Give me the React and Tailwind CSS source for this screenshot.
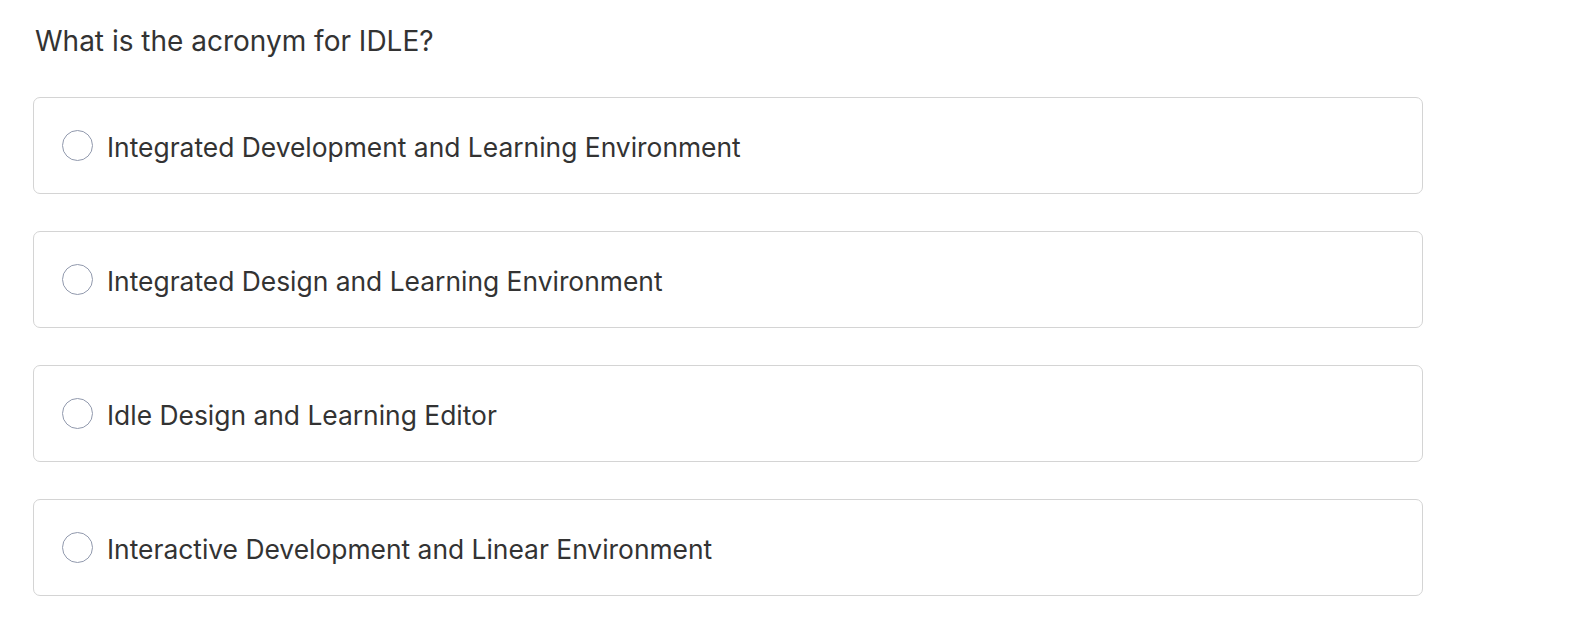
export default function App() {
  const options = [
    "Integrated Development and Learning Environment",
    "Integrated Design and Learning Environment",
    "Idle Design and Learning Editor",
    "Interactive Development and Linear Environment",
  ];
  return (
    <div className="min-h-[642px] w-full bg-white pl-[33px] pt-[21px] text-[#333333]" style={{ fontFamily: 'Inter, "Noto Sans", sans-serif' }}>
      <div className="pl-[2px] text-[28px] leading-[40px]">What is the acronym for IDLE?</div>
      <div className="mt-[36px] flex w-[1390px] flex-col gap-[37px]">
        {options.map((o) => (
          <label key={o} className="flex h-[97px] items-center rounded-[7px] border border-[#d4d4d4] pl-[28px]">
            <span className="h-[31px] w-[31px] shrink-0 rounded-full border border-[#9199ad] bg-white" />
            <span className="ml-[14px] pt-[3px] text-[26.4px] leading-[36px]">{o}</span>
          </label>
        ))}
      </div>
    </div>
  );
}
